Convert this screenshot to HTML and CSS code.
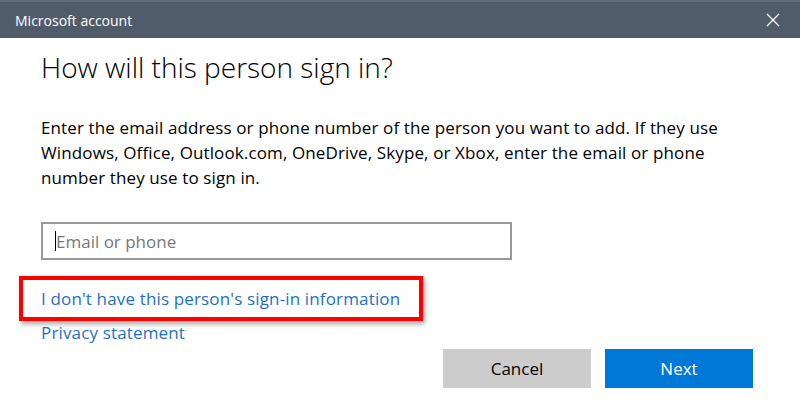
FILE: index.html
```html
<!DOCTYPE html>
<html lang="en">
<head>
  <meta charset="UTF-8" />
  <title>Microsoft account</title>
  <link rel="stylesheet" href="styles.css">
</head>
<body>

  <div class="titlebar">
    <span class="titlebar-text">Microsoft account</span>
    <span class="close">
      <svg width="14" height="14" viewBox="0 0 14 14"><path d="M1 1 L13 13 M13 1 L1 13" stroke="#fff" stroke-width="1.3" fill="none"/></svg>
    </span>
  </div>

  <div class="content">
    <h1>How will this person sign in?</h1>
    <p class="intro">Enter the email address or phone number of the person you want to add. If they use Windows, Office, Outlook.com, OneDrive, Skype, or Xbox, enter the email or phone number they use to sign in.</p>

    <div class="field">
      <span class="caret"></span>
      <input type="text" placeholder="Email or phone">
    </div>

    <div class="bottom">
      <div class="links">
        <div class="highlight"><a href="#">I don't have this person's sign-in information</a></div>
        <a href="#" class="privacy">Privacy statement</a>
      </div>
      <div class="actions">
        <button class="btn btn-cancel">Cancel</button>
        <button class="btn btn-next">Next</button>
      </div>
    </div>
  </div>

</body>
</html>
```

FILE: styles.css
```css
body {
  margin: 0;
  font-family: "Open Sans", "Noto Sans", sans-serif;
  background: #fff;
  color: #000;
  width: 800px;
  height: 400px;
  overflow: hidden;
}
.titlebar {
  height: 36px;
  background: #515c6a;
  border-top: 2px solid #636d7a;
  display: flex;
  align-items: center;
  justify-content: space-between;
  padding: 0 20px 0 15px;
  color: #fff;
}
.titlebar-text {
  font-size: 14px;
}
.close {
  display: flex;
}
.content {
  padding: 0 47px 0 41px;
}
h1 {
  font-weight: 300;
  font-size: 28px;
  line-height: 36px;
  margin: 11px 0 0;
}
.intro {
  font-size: 17px;
  letter-spacing: 0.12px;
  line-height: 25px;
  margin: 30px 0 0;
}
.field {
  position: relative;
  width: 471px;
  margin-top: 32px;
}
.field input {
  box-sizing: border-box;
  width: 100%;
  height: 38px;
  border: 2px solid #999;
  padding: 0 13px;
  font-family: inherit;
  font-size: 17px;
  outline: none;
}
.field input::placeholder {
  color: #777;
}
.caret {
  position: absolute;
  left: 14px;
  top: 9px;
  width: 1px;
  height: 20px;
  background: #000;
}
.bottom {
  display: flex;
  justify-content: space-between;
  align-items: flex-start;
  margin-top: 16px;
}
.links a {
  color: #1f6fc5;
  text-decoration: none;
  font-size: 17px;
  letter-spacing: 0.15px;
}
.highlight {
  margin-left: -22px;
  padding: 7px 19px 7px 18px;
  border: 4px solid #f00;
  box-shadow: 2px 3px 5px rgba(0, 0, 0, 0.35);
}
.privacy {
  display: block;
  margin-top: 0;
}
.actions {
  display: flex;
  gap: 14px;
  padding-top: 73px;
}
.btn {
  width: 148px;
  height: 39px;
  border: none;
  font-family: inherit;
  font-size: 17px;
}
.btn-cancel {
  background: #cccccc;
  color: #000;
}
.btn-next {
  background: #0078d7;
  color: #fff;
}
```
